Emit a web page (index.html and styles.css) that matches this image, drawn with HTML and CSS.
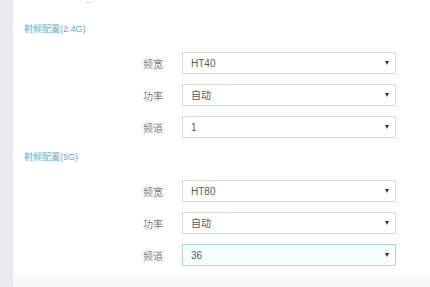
FILE: index.html
```html
<!DOCTYPE html>
<html lang="zh-CN">
<head>
    <meta charset="UTF-8">
    <meta name="viewport" content="width=device-width, initial-scale=1.0">
    <title>无线设置</title>
    <link rel="stylesheet" href="styles.css">
</head>
<body>
    <div class="layout">
        <aside class="sidebar"></aside>
        <main class="main">
            <div class="panel">
                <div class="top-row">
                    <span class="frag frag-a">一 _ 一</span>
                    <span class="frag frag-b">一一一</span>
                    <span class="frag frag-c">一一</span>
                </div>

                <!-- 2.4G -->
                <div class="section-title">射频配置(2.4G)</div>
                <div class="form">
                    <div class="form-row">
                        <label class="form-label" for="bw24">频宽</label>
                        <div class="select-wrap">
                            <select id="bw24">
                                <option>HT40</option>
                                <option>HT20</option>
                            </select>
                        </div>
                    </div>
                    <div class="form-row">
                        <label class="form-label" for="pw24">功率</label>
                        <div class="select-wrap">
                            <select id="pw24">
                                <option>自动</option>
                            </select>
                        </div>
                    </div>
                    <div class="form-row">
                        <label class="form-label" for="ch24">频道</label>
                        <div class="select-wrap">
                            <select id="ch24">
                                <option>1</option>
                            </select>
                        </div>
                    </div>
                </div>

                <!-- 5G -->
                <div class="section-title second">射频配置(5G)</div>
                <div class="form">
                    <div class="form-row">
                        <label class="form-label" for="bw5">频宽</label>
                        <div class="select-wrap">
                            <select id="bw5">
                                <option>HT80</option>
                            </select>
                        </div>
                    </div>
                    <div class="form-row">
                        <label class="form-label" for="pw5">功率</label>
                        <div class="select-wrap">
                            <select id="pw5">
                                <option>自动</option>
                            </select>
                        </div>
                    </div>
                    <div class="form-row">
                        <label class="form-label" for="ch5">频道</label>
                        <div class="select-wrap focused">
                            <select id="ch5">
                                <option>36</option>
                            </select>
                        </div>
                    </div>
                </div>
            </div>
        </main>
    </div>
</body>
</html>
```

FILE: styles.css
```css
body {
    margin: 0;
    font-family: "Liberation Sans", "Noto Sans CJK SC", sans-serif;
    font-size: 10px;
    color: #666;
    background: #f7f7f8;
    overflow: hidden;
}

.layout {
    display: flex;
    height: 287px;
}

.sidebar {
    width: 13px;
    flex-shrink: 0;
    background: #ebebed;
}

.main {
    flex: 1;
    background: #f7f7f8;
}

.panel {
    background: #fff;
    height: 275px;
    overflow: hidden;
}

.top-row {
    display: flex;
    height: 10px;
    line-height: 10px;
    margin-top: -7px;
    color: #d6d6d6;
    font-size: 10px;
}

.frag-a { margin-left: 60px; }
.frag-b { margin-left: 45px; }
.frag-c { margin-left: 185px; }

.section-title {
    margin: 19px 0 16px 11px;
    height: 14px;
    line-height: 14px;
    font-size: 9px;
    color: #5eb1d6;
}

.section-title.second {
    margin-top: 12px;
}

.form {
    display: flex;
    flex-direction: column;
    gap: 10px;
}

.form-row {
    display: flex;
    align-items: center;
    height: 22px;
}

.form-label {
    width: 150px;
    text-align: right;
    margin-right: 19px;
    color: #808080;
    font-size: 10px;
}

.select-wrap {
    position: relative;
    width: 214px;
    height: 22px;
}

.select-wrap select {
    appearance: none;
    -webkit-appearance: none;
    width: 100%;
    height: 100%;
    box-sizing: border-box;
    border: 1px solid #d9d9d9;
    border-radius: 0;
    background: #fff;
    padding: 0 8px;
    font-family: "Liberation Sans", "Noto Sans CJK SC", sans-serif;
    font-size: 10px;
    color: #5a5a5a;
    outline: none;
}

.select-wrap::after {
    content: "";
    position: absolute;
    right: 7px;
    top: 9px;
    border-left: 2.5px solid transparent;
    border-right: 2.5px solid transparent;
    border-top: 4px solid #333;
    pointer-events: none;
}

.select-wrap.focused select {
    border-color: #a9dcd8;
    background: #f8fdfd;
}
```
